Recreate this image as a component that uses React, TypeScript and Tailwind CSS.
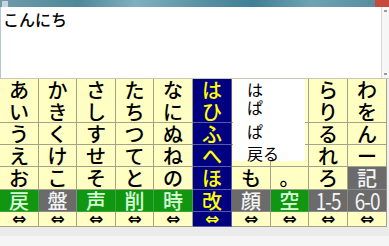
import React from "react";

const rows: string[][] = [
  ["あ", "か", "さ", "た", "な", "は", "", "", "ら", "わ"],
  ["い", "き", "し", "ち", "に", "ひ", "", "", "り", "を"],
  ["う", "く", "す", "つ", "ぬ", "ふ", "", "", "る", "ん"],
  ["え", "け", "せ", "て", "ね", "へ", "", "", "れ", "ー"],
  ["お", "こ", "そ", "と", "の", "ほ", "も", "。", "ろ", "記"],
  ["戻", "盤", "声", "削", "時", "改", "顔", "空", "1-5", "6-0"],
  ["⇔", "⇔", "⇔", "⇔", "⇔", "⇔", "⇔", "⇔", "⇔", "⇔"],
];

type Kind = "cream" | "navy" | "green" | "gray";

function kindOf(r: number, c: number): Kind {
  if (c === 5) return "navy";
  if (r === 4 && c === 9) return "gray";
  if (r === 5) {
    if ([0, 2, 3, 4, 7].includes(c)) return "green";
    return "gray";
  }
  return "cream";
}

const kindClass: Record<Kind, string> = {
  cream: "bg-[#ffffc4] text-black border-[#a3a38c]",
  navy: "bg-[#000080] text-[#ffff00] border-[#5a5aa0]",
  green: "bg-[#119611] text-[#d8ffd8] border-[#3aa63a]",
  gray: "bg-[#6b6b6b] text-[#f4f4f4] border-[#8a8a8a]",
};

export default function App() {
  return (
    <div
      className="w-[389px] h-[246px] flex flex-col bg-[#f0f0f0] overflow-hidden"
      style={{ fontFamily: '"Noto Sans CJK JP", "Noto Sans", sans-serif' }}
    >
      {/* title bar */}
      <div className="h-[7px] flex bg-[linear-gradient(90deg,#6f9bab_0%,#4f8799_20%,#7fb0bf_35%,#5d93a5_50%,#3f7f95_65%,#6ea3b3_80%,#5a8fa2_95%)]">
        <div className="w-[6px] h-[6px] mt-[1px] ml-[2px] bg-[#c8d4dc]" />
        <div className="flex-1" />
        <div className="w-[14px] bg-[#c9483c]" />
      </div>
      {/* text area */}
      <div className="h-[71px] flex bg-white border-l border-[#b9c6cf]">
        <div className="flex-1 pl-[2px] pt-[2px] text-[16px] leading-[20px] text-black font-medium">
          こんにち
        </div>
        <div className="w-[8px] border-l border-[#d8d8d8] bg-[#f6f6f6] flex flex-col justify-between items-center py-[3px]">
          <div className="w-[3px] h-[2px] bg-[#9a9a9a]" />
          <div className="w-[3px] h-[2px] bg-[#9a9a9a]" />
        </div>
      </div>
      <div className="h-px bg-[#c8c8b8]" />
      {/* keyboard */}
      <div className="relative w-[387px]">
        <div className="grid grid-cols-[39px_38px_39px_38px_39px_39px_39px_38px_39px_39px] grid-rows-[22px_22px_22px_22px_23px_22px_15px]">
          {rows.map((row, r) =>
            row.map((ch, c) => {
              const k = kindOf(r, c);
              const isArrow = r === 6;
              const isNum = ch.length > 1;
              return (
                <div
                  key={`${r}-${c}`}
                  className={`flex items-center justify-center border-r ${
                    r === 0 ? "" : "border-b"
                  } ${kindClass[k]} ${
                    isArrow
                      ? "text-[17px] leading-[14px] font-bold"
                      : isNum
                      ? "text-[20px] leading-[20px] tracking-[-1px]"
                      : "text-[20px] leading-[20px] font-medium"
                  }`}
                  style={
                    isArrow
                      ? { fontFamily: '"DejaVu Sans", sans-serif' }
                      : undefined
                  }
                >
                  {isNum ? (
                    <span className="inline-block scale-y-[1.15] scale-x-[0.95]">{ch}</span>
                  ) : (
                    ch
                  )}
                </div>
              );
            })
          )}
        </div>
        {/* popup menu */}
        <div className="absolute left-[233px] top-0 w-[72px] h-[82px] bg-white flex flex-col pl-[14px] text-[16px] leading-[16px] text-black">
          <div className="mt-[2px]">は</div>
          <div className="mt-[2px]">ぱ</div>
          <div className="mt-[8px]">ぱ</div>
          <div className="mt-[6px]">戻る</div>
        </div>
      </div>
      <div className="h-[9px] bg-[#ebebeb]" />
      <div className="flex-1 bg-[#f5f5f5]" />
    </div>
  );
}
